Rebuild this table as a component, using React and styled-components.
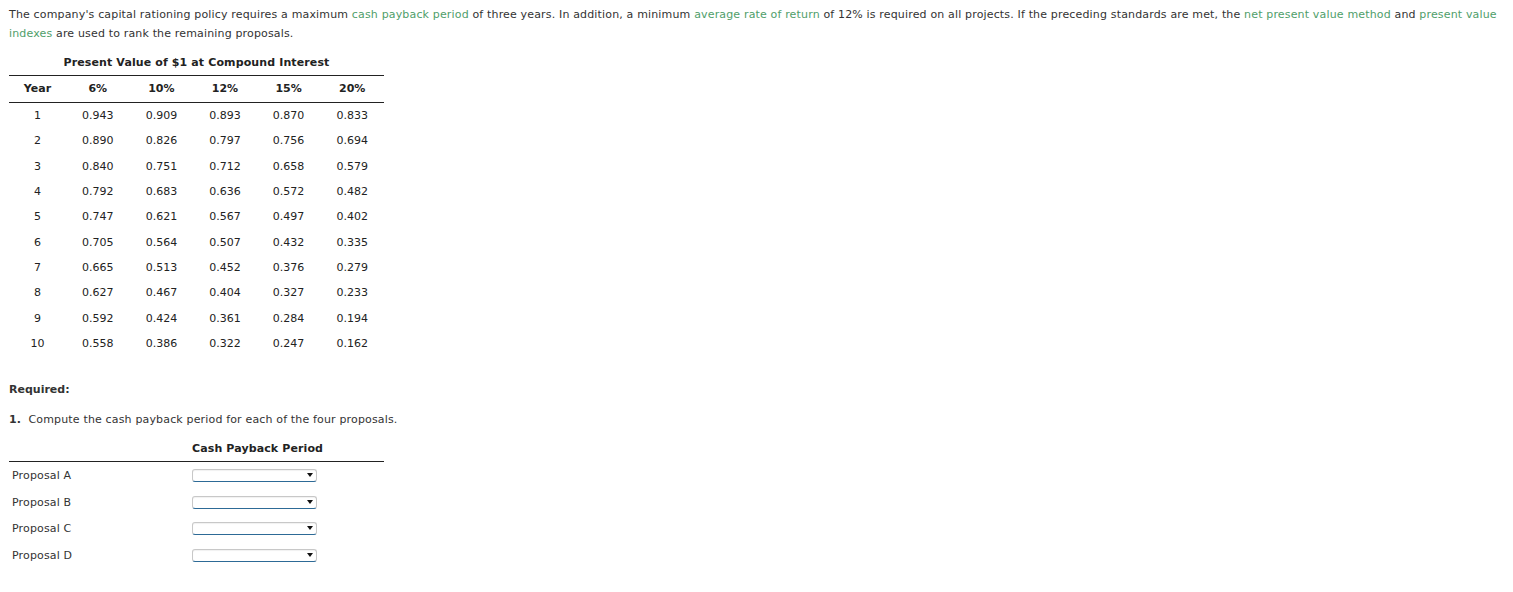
import React from "react";
import styled, { createGlobalStyle } from "styled-components";

const Global = createGlobalStyle`
  html, body { margin: 0; padding: 0; background: #fff; }
  body { font-family: "DejaVu Sans", Verdana, sans-serif; font-size: 11px; color: #333; }
`;

const Page = styled.div`
  padding: 5px 9px 20px 9px;
`;

const Intro = styled.p`
  margin: 0;
  line-height: 19px;
  color: #333;
  letter-spacing: 0.16px;
`;

const Term = styled.span`
  color: #4f9e6a;
`;

const Block = styled.div`
  width: ${(p) => (p.$wide ? "auto" : "375px")};
  margin-top: ${(p) => p.$mt || 0}px;
`;

const Caption = styled.div`
  text-align: center;
  font-weight: bold;
  color: #222;
  line-height: 16px;
  margin-bottom: 4px;
  letter-spacing: 0.12px;
`;

const Table = styled.table`
  width: 375px;
  border-collapse: collapse;
  border-top: 1px solid #222;
  color: #222;
`;

const HeadCell = styled.th`
  font-weight: bold;
  text-align: center;
  height: 25px;
  padding: 0 0 1px 0;
  border-bottom: 1px solid #222;
  width: ${(p) => p.$w}px;
`;

const Cell = styled.td`
  text-align: center;
  padding: 0;
  height: 25.33px;
`;

const Heading = styled.div`
  font-weight: bold;
  color: #333;
  line-height: 16px;
`;

const Task = styled.p`
  margin: 14px 0 0 0;
  line-height: 16px;
  color: #333;
  letter-spacing: 0.16px;
`;

const Num = styled.b`
  color: #333;
`;

const Grid = styled.div`
  width: 375px;
  display: grid;
  grid-template-columns: 183px 131px 1fr;
`;

const GridHead = styled.div`
  grid-column: 2;
  text-align: center;
  font-weight: bold;
  color: #222;
  line-height: 16px;
  padding-bottom: 4px;
  letter-spacing: 0.12px;
  white-space: nowrap;
`;

const Rule = styled.div`
  grid-column: 1 / -1;
  height: 1px;
  background: #222;
`;

const Label = styled.div`
  grid-column: 1;
  height: 26.67px;
  display: flex;
  align-items: center;
  padding-left: 3px;
  color: #333;
  letter-spacing: 0.15px;
`;

const SelectBox = styled.div`
  grid-column: 2;
  height: 26.67px;
  display: flex;
  align-items: center;
`;

const Select = styled.div`
  position: relative;
  box-sizing: border-box;
  width: 125px;
  height: 13px;
  border: 1px solid #c8c8c8;
  border-bottom: 1px solid #2d6a96;
  border-radius: 3px;
  background: #fff;
  box-shadow: inset 0 1px 1px rgba(0,0,0,0.06);
`;

const Arrow = styled.span`
  position: absolute;
  right: 3px;
  top: 3px;
  width: 0;
  height: 0;
  border-left: 3px solid transparent;
  border-right: 3px solid transparent;
  border-top: 4px solid #111;
`;

const rates = ["6%", "10%", "12%", "15%", "20%"];
const data = [
  ["0.943", "0.909", "0.893", "0.870", "0.833"],
  ["0.890", "0.826", "0.797", "0.756", "0.694"],
  ["0.840", "0.751", "0.712", "0.658", "0.579"],
  ["0.792", "0.683", "0.636", "0.572", "0.482"],
  ["0.747", "0.621", "0.567", "0.497", "0.402"],
  ["0.705", "0.564", "0.507", "0.432", "0.335"],
  ["0.665", "0.513", "0.452", "0.376", "0.279"],
  ["0.627", "0.467", "0.404", "0.327", "0.233"],
  ["0.592", "0.424", "0.361", "0.284", "0.194"],
  ["0.558", "0.386", "0.322", "0.247", "0.162"],
];
const proposals = ["Proposal A", "Proposal B", "Proposal C", "Proposal D"];

export default function App() {
  return (
    <Page>
      <Global />
      <Intro>
        The company's capital rationing policy requires a maximum <Term>cash payback period</Term> of three years. In addition, a minimum <Term>average rate of return</Term> of 12% is required on all projects. If the preceding standards are met, the <Term>net present value method</Term> and <Term>present value indexes</Term> are used to rank the remaining proposals.
      </Intro>
      <Block $mt={12}>
        <Caption>Present Value of $1 at Compound Interest</Caption>
        <Table>
          <thead>
            <tr>
              <HeadCell $w={57}>Year</HeadCell>
              {rates.map((r) => (
                <HeadCell key={r} $w={63.6}>{r}</HeadCell>
              ))}
            </tr>
          </thead>
          <tbody>
            {data.map((row, i) => (
              <tr key={i}>
                <Cell>{i + 1}</Cell>
                {row.map((v, j) => (
                  <Cell key={j}>{v}</Cell>
                ))}
              </tr>
            ))}
          </tbody>
        </Table>
      </Block>
      <Block $mt={26} $wide>
        <Heading>Required:</Heading>
        <Task>
          <Num>1.</Num>&nbsp; Compute the cash payback period for each of the four proposals.
        </Task>
      </Block>
      <Block $mt={13}>
        <Grid>
          <GridHead>Cash Payback Period</GridHead>
          <Rule />
          {proposals.map((p) => (
            <React.Fragment key={p}>
              <Label>{p}</Label>
              <SelectBox>
                <Select>
                  <Arrow />
                </Select>
              </SelectBox>
            </React.Fragment>
          ))}
        </Grid>
      </Block>
    </Page>
  );
}
